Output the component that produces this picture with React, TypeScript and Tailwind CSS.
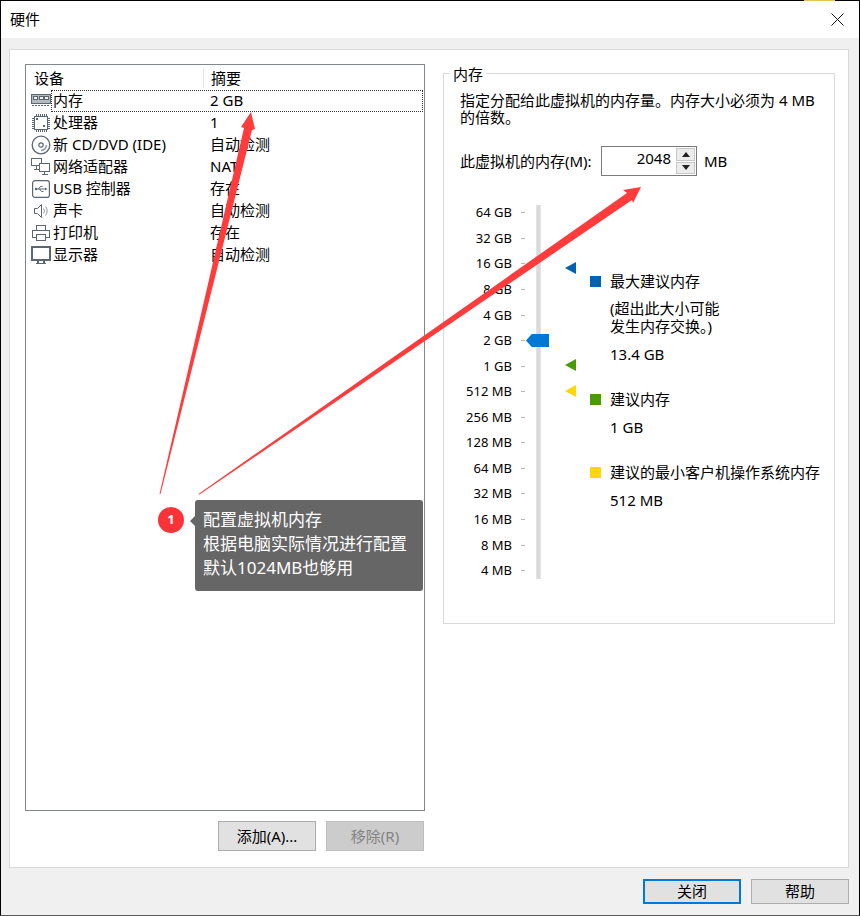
const FONT = { fontFamily: '"Noto Sans", "Noto Sans CJK SC", sans-serif' }

const stroke = '#5c6670'

const icons = {
  memory: (
    <svg width="20" height="16" viewBox="0 0 20 16" fill="none" stroke={stroke} shapeRendering="crispEdges">
      <path d="M.5 1.500h19v9H.5z" fill="#b4bbc0" />
      <path d="M2.500 3.500h4v3h-4zM8 3.500h4v3H8zM13.500 3.500h4v3h-4z" fill="#f2f4f5" />
      <path d="M1 12.500h18" strokeDasharray="2 1" />
    </svg>
  ),
  cpu: (
    <svg width="20" height="20" viewBox="0 0 20 20" fill="none" stroke={stroke} shapeRendering="crispEdges">
      <path d="M3.500 3.500h13v13h-13z" />
      <path d="M5.500 1v2M7.500 1v2M9.500 1v2M11.500 1v2M13.500 1v2M15.500 1v2M5.500 17v2M7.500 17v2M9.500 17v2M11.500 17v2M13.500 17v2M15.500 17v2M1 5.500h2M1 7.500h2M1 9.500h2M1 11.500h2M1 13.500h2M1 15.500h2M17 5.500h2M17 7.500h2M17 9.500h2M17 11.500h2M17 13.500h2M17 15.500h2" />
      <path d="M5 5h2v2H5zM12 12h2v2h-2z" fill={stroke} stroke="none" />
    </svg>
  ),
  cd: (
    <svg width="20" height="20" viewBox="0 0 20 20" fill="none" stroke={stroke}>
      <circle cx="10" cy="10" r="8.800" strokeWidth="1.300" />
      <circle cx="10" cy="10" r="2.200" strokeWidth="1.200" />
      <path d="M10 15.500a5.500 5.500 0 0 0 5.500-5.500" stroke="#8d979f" strokeWidth="1.500" />
    </svg>
  ),
  network: (
    <svg width="20" height="20" viewBox="0 0 20 20" fill="none" stroke={stroke} shapeRendering="crispEdges">
      <path d="M.5 1.500h10v7H.5zM3 12.500h5M5.500 9v3" />
      <path d="M8.500 6.500h10v8h-10z" fill="#fff" />
      <path d="M10.500 17.500h6M13.500 15v2" />
    </svg>
  ),
  usb: (
    <svg width="20" height="20" viewBox="0 0 20 20" fill="none" stroke={stroke}>
      <rect x="1.600" y="1.600" width="16.800" height="16.800" rx="2.500" strokeWidth="1.200" />
      <path d="M5 10h9M7.500 10l2-2.500h2M8.500 10l2 2.500h2" />
      <path d="M14 8.500v3l2.500-1.500z" fill={stroke} stroke="none" />
      <circle cx="5" cy="10" r="1.200" fill={stroke} stroke="none" />
    </svg>
  ),
  sound: (
    <svg width="20" height="18" viewBox="0 0 20 18" fill="none" stroke={stroke}>
      <path d="M3.500 6.500h3l4-4v13l-4-4h-3z" />
      <path d="M12.500 6.500a4 4 0 0 1 0 5M14.500 4.500a7 7 0 0 1 0 9" stroke="#8d979f" />
    </svg>
  ),
  printer: (
    <svg width="20" height="20" viewBox="0 0 20 20" fill="none" stroke={stroke} strokeWidth="1.300" shapeRendering="crispEdges">
      <path d="M5.500 7V2.500h9V7M5 14.500H1.500v-7h17v7H15" />
      <path d="M5.500 11.500h9v6h-9z" />
    </svg>
  ),
  monitor: (
    <svg width="20" height="20" viewBox="0 0 20 20" fill="none" stroke={stroke} shapeRendering="crispEdges">
      <path d="M1 2h18v13H1z" strokeWidth="2" />
      <path d="M7 16v2M13 16v2M5 18.500h10" strokeWidth="1.400" />
    </svg>
  ),
}

const devices = [
  { icon: icons.memory, name: '内存', summary: '2 GB', selected: true },
  { icon: icons.cpu, name: '处理器', summary: '1' },
  { icon: icons.cd, name: '新 CD/DVD (IDE)', summary: '自动检测' },
  { icon: icons.network, name: '网络适配器', summary: 'NAT' },
  { icon: icons.usb, name: 'USB 控制器', summary: '存在' },
  { icon: icons.sound, name: '声卡', summary: '自动检测' },
  { icon: icons.printer, name: '打印机', summary: '存在' },
  { icon: icons.monitor, name: '显示器', summary: '自动检测' },
]

const scale = ['64 GB', '32 GB', '16 GB', '8 GB', '4 GB', '2 GB', '1 GB', '512 MB', '256 MB', '128 MB', '64 MB', '32 MB', '16 MB', '8 MB', '4 MB']

function Marker({ color, className }: { color: string; className: string }) {
  return (
    <svg width="12" height="12" viewBox="0 0 12 12" className={`absolute left-[105px] ${className}`}>
      <path d="M0 6 11 0v12z" fill={color} />
    </svg>
  )
}

function Slider() {
  return (
    <div className="relative w-[110px] pt-[1px] shrink-0">
      {scale.map((s) => (
        <div key={s} className="flex items-center justify-end h-[25.57px] w-[65px]">
          <span className="text-[13px] leading-none mr-[9px] whitespace-nowrap">{s}</span>
          <span className="w-[4px] h-px bg-[#b8b8b8]" />
        </div>
      ))}
      <div className="absolute left-[76px] top-[6px] w-[5px] h-[374px] bg-[#dadada] border-x border-[#e3e3e3]" />
      <div className="absolute left-[66px] top-[135px] w-[23px] h-[13px] bg-[#0078d7] [clip-path:polygon(0_50%,25%_0,100%_0,100%_100%,25%_100%)]" />
      <Marker color="#0063b1" className="top-[63px]" />
      <Marker color="#4a9a0a" className="top-[160px]" />
      <Marker color="#ffd60a" className="top-[186px]" />
    </div>
  )
}

function Legend({ color, title, children }: { color: string; title: string; children: React.ReactNode }) {
  return (
    <div className="flex flex-col">
      <div className="flex items-center h-[20px]">
        <span className="w-[11px] h-[11px] mr-[9px] shrink-0" style={{ background: color }} />
        <span className="whitespace-nowrap">{title}</span>
      </div>
      <div className="pl-[20px]">{children}</div>
    </div>
  )
}

function Btn({ label, variant = 'normal', className = '' }: { label: string; variant?: 'normal' | 'disabled' | 'primary'; className?: string }) {
  const look =
    variant === 'disabled'
      ? 'bg-[#cccccc] border border-[#bfbfbf] text-[#838383]'
      : variant === 'primary'
        ? 'bg-[#e1e1e1] border-2 border-[#0078d7] text-black'
        : 'bg-[#e1e1e1] border border-[#adadad] text-black'
  return <div className={`w-[98px] flex items-center justify-center text-[15px] ${look} ${className}`}>{label}</div>
}

export default function App() {
  return (
    <div style={FONT} className="relative w-[860px] h-[916px] flex flex-col bg-[#f0f0f0] border border-black border-b-[#5a5a5a] text-[15px] text-black">
      <span className="absolute left-[803px] top-[-1px] w-[31px] h-px bg-[#e6c25a]" />
      {/* title bar */}
      <div className="h-[37px] bg-white flex items-center justify-between pl-[9px] pr-[15px] shrink-0">
        <span>硬件</span>
        <svg width="13" height="13" viewBox="0 0 13 13" stroke="#111" fill="none">
          <path d="M.5.5l12 12M12.500.5l-12 12" />
        </svg>
      </div>

      {/* content */}
      <div className="mt-[11px] mx-[8px] mr-[10px] h-[819px] bg-white border border-[#d9d9d9] flex shrink-0">
        {/* device list */}
        <div className="w-[416px] pl-[15px] pt-[14px] shrink-0 flex flex-col">
          <div className="w-[400px] h-[747px] border border-[#82878c] pt-[3px] flex flex-col">
            <div className="flex h-[20px] items-center">
              <span className="w-[178px] pl-[8px] border-r border-[#e5e5e5] h-full flex items-center">设备</span>
              <span className="pl-[7px]">摘要</span>
            </div>
            <div className="pt-[2px]">
              {devices.map((d) => (
                <div key={d.name} className="flex items-center h-[22px] pl-[5px]">
                  <span className="w-[20px] flex justify-center shrink-0">{d.icon}</span>
                  <div className={`flex items-center flex-1 h-full mr-[1px] pb-[2px] ${d.selected ? 'outline-1 outline-dotted outline-[#333] -outline-offset-1' : ''}`}>
                    <span className="w-[159px] pl-[2px] whitespace-nowrap">{d.name}</span>
                    <span>{d.summary}</span>
                  </div>
                </div>
              ))}
            </div>
          </div>
          <div className="flex justify-end gap-[10px] w-[399px] mt-[10px]">
            <Btn label="添加(A)..." className="h-[30px]" />
            <Btn label="移除(R)" variant="disabled" className="h-[30px]" />
          </div>
        </div>

        {/* memory group */}
        <div className="ml-[17px] mt-[23px] w-[392px] h-[551px] border border-[#d9d9d9] relative px-[16px] shrink-0">
          <span className="absolute left-[6px] top-[-10px] bg-white px-[3px] leading-[20px]">内存</span>
          <p className="mt-[18px] leading-[17px] w-[365px]">指定分配给此虚拟机的内存量。内存大小必须为 4 MB<br />的倍数。</p>
          <div className="flex items-center mt-[20px] h-[30px]">
            <span className="w-[141px] whitespace-nowrap">此虚拟机的内存(M):</span>
            <div className="w-[96px] h-[30px] border border-[#7a7a7a] flex pr-[1px] py-[1px]">
              <span className="flex-1 text-right pr-[5px] leading-[20px]">2048</span>
              <div className="w-[19px] flex flex-col gap-[1px]">
                <span className="flex-1 bg-[#ececec] border border-[#c8c8c8] flex items-center justify-center">
                  <svg width="8" height="5" viewBox="0 0 8 5"><path d="M4 0l4 5H0z" fill="#222" /></svg>
                </span>
                <span className="flex-1 bg-[#ececec] border border-[#c8c8c8] flex items-center justify-center">
                  <svg width="8" height="5" viewBox="0 0 8 5"><path d="M4 5l4-5H0z" fill="#222" /></svg>
                </span>
              </div>
            </div>
            <span className="ml-[7px]">MB</span>
          </div>
          <div className="flex mt-[23px]">
            <Slider />
            <div className="flex flex-col pt-[72px] pl-[20px]">
              <Legend color="#0063b1" title="最大建议内存">
                <p className="mt-[8px] leading-[18px]">(超出此大小可能<br />发生内存交换。)</p>
                <p className="mt-[9px] leading-[20px]">13.4 GB</p>
              </Legend>
              <div className="mt-[25px]">
                <Legend color="#4a9a0a" title="建议内存">
                  <p className="mt-[8px] leading-[20px]">1 GB</p>
                </Legend>
              </div>
              <div className="mt-[25px]">
                <Legend color="#ffd60a" title="建议的最小客户机操作系统内存">
                  <p className="mt-[8px] leading-[20px] whitespace-nowrap">512 MB</p>
                </Legend>
              </div>
            </div>
          </div>
        </div>
      </div>

      {/* footer */}
      <div className="flex justify-end gap-[10px] mt-[11px] pr-[10px]">
        <Btn label="关闭" variant="primary" className="h-[25px]" />
        <Btn label="帮助" className="h-[25px]" />
      </div>

      {/* annotation overlay */}
      <svg className="absolute left-[-1px] top-[-1px] pointer-events-none" width="860" height="916" viewBox="0 0 860 916">
        <polygon points="159.500,494 160.500,494 252,130 255,129 251,112 241,127 244,128" fill="#ff3b3b" />
        <polygon points="198.500,494 199.500,494.500 632,200 633,203 641,187 623,190 627,193" fill="#ff3b3b" />
      </svg>
      <div className="absolute left-[157px] top-[506px] w-[26px] h-[26px] rounded-full bg-[#fb3338] text-white text-[13px] font-bold flex items-center justify-center">1</div>
      <div className="absolute left-[194px] top-[499px] w-[228px] h-[91px] rounded-[3px] bg-[#666666] text-white text-[17px] leading-[24px] pl-[8px] pt-[8px] whitespace-nowrap">
        <span className="absolute left-[-5px] top-[16px] w-0 h-0 border-y-[5px] border-y-transparent border-r-[5px] border-r-[#666666]" />
        配置虚拟机内存<br />根据电脑实际情况进行配置<br />默认1024MB也够用
      </div>
    </div>
  )
}
